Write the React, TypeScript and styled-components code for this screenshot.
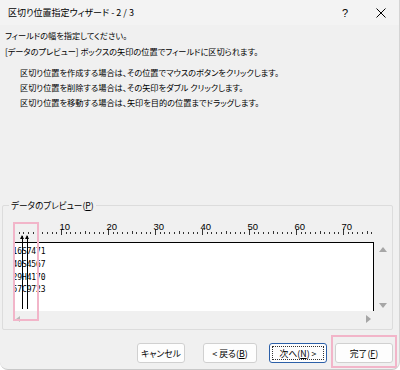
import React from 'react';
import styled, { createGlobalStyle } from 'styled-components';

const GlobalStyle = createGlobalStyle`
  html, body {
    margin: 0;
    padding: 0;
    background: #ffffff;
  }
  body {
    font-family: "Noto Sans CJK JP", "Noto Sans", sans-serif;
  }
`;

const CHAR_W = 4.7;
const rows = ['16S7471', '40S4567', '29H4170', '57C9723'];

const Window = styled.div`
  position: relative;
  box-sizing: border-box;
  width: 400px;
  height: 370px;
  display: flex;
  flex-direction: column;
  background: #f0f0f0;
  border-right: 1px solid #d4d4d4;
  border-bottom: 1px solid #c8c8c8;
  border-radius: 0 0 8px 8px;
  overflow: hidden;
  font-feature-settings: 'palt';
  color: #000;
`;

const TitleBar = styled.div`
  height: 25px;
  flex: none;
  display: flex;
  align-items: center;
  padding-left: 8px;
  background: #f3f3f3;
  font-size: 9px;
`;

const TitleText = styled.div`
  flex: 1;
`;

const TitleButton = styled.div`
  width: 36px;
  height: 25px;
  display: flex;
  align-items: center;
  justify-content: center;
  font-family: "Liberation Sans", sans-serif;
  font-size: 11px;
`;

const Body = styled.div`
  flex: 1;
  display: flex;
  flex-direction: column;
  padding: 2px 0 0 5px;
  font-size: 8.2px;
`;

const Line = styled.div`
  line-height: 16px;
  white-space: nowrap;
`;

const Instructions = styled.div`
  margin-top: 6px;
  padding-left: 15px;
  & > div {
    line-height: 15px;
    white-space: nowrap;
  }
`;

const Group = styled.section`
  margin: auto 6px 0 -3px;
  padding: 0 0 1px 10px;
  height: 125px;
  box-sizing: border-box;
  border: 1px solid #dcdcdc;
  border-radius: 2px;
  position: relative;
`;

const Legend = styled.div`
  width: fit-content;
  margin: -7px 0 0 -4px;
  padding: 0 2px;
  background: #f0f0f0;
  font-size: 8.6px;
  line-height: 12px;
  white-space: nowrap;
  u {
    text-decoration: underline;
  }
`;

const PreviewGrid = styled.div`
  display: grid;
  grid-template-columns: 361px 18px;
  grid-template-rows: 21px 69px 15px;
  margin-top: 10px;
  position: relative;
`;

const RulerSvg = styled.svg`
  display: block;
  grid-column: 1;
`;

const DataBox = styled.div`
  grid-column: 1;
  background: #ffffff;
  border-top: 1px solid #000;
  border-right: 1px solid #000;
  border-left: 2px solid #6f6a72;
  overflow: hidden;
  padding-top: 3px;
  box-sizing: border-box;
`;

const DataRow = styled.div`
  font-family: "DejaVu Sans Mono", monospace;
  font-size: 8px;
  line-height: 12.8px;
  margin-left: -2.5px;
  letter-spacing: -0.1px;
  white-space: pre;
`;

const VScroll = styled.div`
  grid-column: 2;
  grid-row: 2;
  display: flex;
  flex-direction: column;
  justify-content: space-between;
  align-items: center;
  padding: 5px 0 3px;
`;

const HScroll = styled.div`
  grid-column: 1;
  grid-row: 3;
  display: flex;
  justify-content: space-between;
  align-items: center;
  padding: 0 3px 0 3px;
`;

const Tri = styled.div<{ dir: 'up' | 'down' | 'left' | 'right' }>`
  width: 0;
  height: 0;
  border-style: solid;
  ${(p) =>
    p.dir === 'up'
      ? 'border-width: 0 4px 5px 4px; border-color: transparent transparent #a6a6a6 transparent;'
      : p.dir === 'down'
      ? 'border-width: 5px 4px 0 4px; border-color: #a6a6a6 transparent transparent transparent;'
      : p.dir === 'left'
      ? 'border-width: 3px 4px 3px 0; border-color: transparent #b9b9b9 transparent transparent;'
      : 'border-width: 4px 0 4px 5px; border-color: transparent transparent transparent #a6a6a6;'}
`;

const BreakLine = styled.div<{ x: number }>`
  position: absolute;
  left: ${(p) => p.x}px;
  top: 15px;
  width: 1px;
  height: 73px;
  background: #000;
  &::before {
    content: '';
    position: absolute;
    left: -2px;
    top: -1px;
    border-style: solid;
    border-width: 0 2.5px 4px 2.5px;
    border-color: transparent transparent #000 transparent;
  }
`;

const Highlight = styled.div`
  position: absolute;
  border: 2px solid #f2b5c9;
  box-sizing: border-box;
  pointer-events: none;
`;

const ButtonRow = styled.div`
  display: flex;
  flex: none;
  justify-content: flex-end;
  align-items: center;
  height: 20px;
  margin: 13px 6px 6px 0;
`;

const Button = styled.button<{ w: number; gap: number; focused?: boolean }>`
  width: ${(p) => p.w}px;
  height: 20px;
  flex: none;
  margin-left: ${(p) => p.gap}px;
  padding: 0;
  box-sizing: border-box;
  background: #fdfdfd;
  border: ${(p) => (p.focused ? '1px solid #2b5fa8' : '1px solid #d0d0d0')};
  border-radius: 3px;
  font-family: inherit;
  font-feature-settings: 'palt';
  font-size: 8.8px;
  white-space: nowrap;
  color: #000;
  display: flex;
  align-items: center;
  justify-content: center;
  position: relative;
  ${(p) =>
    p.focused
      ? `&::after { content: ''; position: absolute; inset: 2px; border: 1px dotted #333; }`
      : ''}
`;

const Ruler = () => {
  const ticks = [];
  for (let i = 0; i <= 76; i++) {
    const x = 1 + i * CHAR_W;
    const major = i % 10 === 0;
    const mid = i % 5 === 0;
    const h = major && i > 0 ? 6 : mid ? 3 : 2;
    const y = major && i > 0 ? 8 : mid ? 10 : 11;
    ticks.push(<rect key={i} x={Math.round(x)} y={y} width={1} height={h} fill={i === 0 ? '#555' : '#333'} />);
  }
  const labels = [10, 20, 30, 40, 50, 60, 70].map((n) => (
    <text
      key={n}
      x={1 + n * CHAR_W - 1.5}
      y={9}
      fontSize="9.5"
      fontFamily="Liberation Sans, sans-serif"
      fill="#000"
    >
      {n}
    </text>
  ));
  return (
    <RulerSvg width={361} height={21} viewBox="0 0 361 21">
      {ticks}
      {labels}
    </RulerSvg>
  );
};

const CloseIcon = () => (
  <svg width="10" height="10" viewBox="0 0 10 10">
    <path d="M0.5 0.5 L9.5 9.5 M9.5 0.5 L0.5 9.5" stroke="#000" strokeWidth="1" fill="none" />
  </svg>
);

export default function App() {
  return (
    <>
      <GlobalStyle />
      <Window>
        <TitleBar>
          <TitleText>区切り位置指定ウィザード - 2 / 3</TitleText>
          <TitleButton>?</TitleButton>
          <TitleButton>
            <CloseIcon />
          </TitleButton>
        </TitleBar>
        <Body>
          <Line>フィールドの幅を指定してください。</Line>
          <Line>[データのプレビュー] ボックスの矢印の位置でフィールドに区切られます。</Line>
          <Instructions>
            <div>区切り位置を作成する場合は、その位置でマウスのボタンをクリックします。</div>
            <div>区切り位置を削除する場合は、その矢印をダブル クリックします。</div>
            <div>区切り位置を移動する場合は、矢印を目的の位置までドラッグします。</div>
          </Instructions>
          <Group>
            <Legend>
              データのプレビュー(<u>P</u>)
            </Legend>
            <PreviewGrid>
              <Ruler />
              <DataBox>
                {rows.map((r) => (
                  <DataRow key={r}>{r}</DataRow>
                ))}
              </DataBox>
              <VScroll>
                <Tri dir="up" />
                <Tri dir="down" />
              </VScroll>
              <HScroll>
                <Tri dir="left" />
                <Tri dir="right" />
              </HScroll>
              <BreakLine x={9} />
              <BreakLine x={14} />
            </PreviewGrid>
            <Highlight style={{ left: 10, top: 16, width: 26, height: 99 }} />
          </Group>
          <ButtonRow>
            <Button w={48} gap={0}>キャンセル</Button>
            <Button w={54} gap={18}>
              &lt; 戻る(<u>B</u>)
            </Button>
            <Button w={58} gap={12} focused>
              次へ(<u>N</u>) &gt;
            </Button>
            <Button w={58} gap={8}>
              完了(<u>F</u>)
            </Button>
          </ButtonRow>
        </Body>
        <Highlight style={{ left: 331, top: 335, width: 66, height: 33 }} />
      </Window>
    </>
  );
}
